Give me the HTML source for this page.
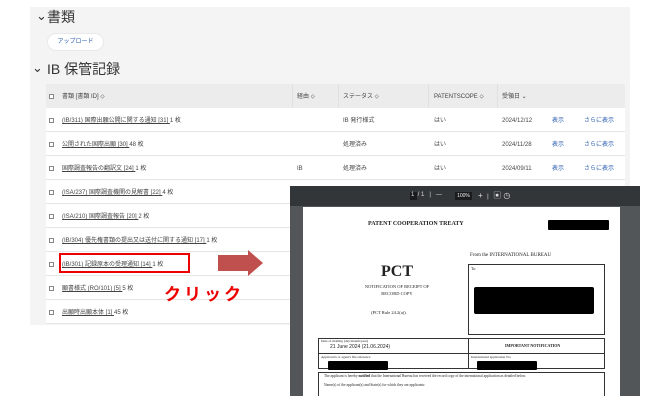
<!DOCTYPE html>
<html><head><meta charset="utf-8"><style>
*{margin:0;padding:0;box-sizing:border-box}
body{width:660px;height:407px;background:#fff;position:relative;overflow:hidden;font-family:"Liberation Sans","Noto Sans CJK JP",sans-serif;color:#333}
.a{position:absolute}
.panel{left:30px;top:7px;width:600px;height:318px;background:#f5f4f5}
.t{font-size:6px;line-height:8px;white-space:nowrap;color:#444}
.lk{text-decoration:underline;color:#444}
.bl{color:#2a5db0}
.cb{width:5px;height:5px;border:0.7px solid #888;background:#fff}
.row{left:46px;width:579px;height:24px;background:#fff;border-bottom:1px solid #e6e6e6}
.serif{font-family:"Liberation Serif",serif;color:#222;white-space:nowrap}
</style></head><body>
<div class="a panel"></div>
<div class="a" style="left:36px;top:8px;font-size:13px;color:#333">⌄</div>
<div class="a" style="left:47px;top:7px;font-size:14px;color:#333">書類</div>
<div class="a" style="left:47px;top:33px;width:57px;height:18px;border-radius:9px;background:#fff;border:1px solid #e8e8e8;font-size:6px;color:#2a5db0;text-align:center;line-height:16px">アップロード</div>
<div class="a" style="left:32px;top:60px;font-size:13px;color:#333">⌄</div>
<div class="a" style="left:47px;top:59px;font-size:14px;color:#333">IB 保管記録</div>
<div class="a" style="left:46px;top:84px;width:579px;height:24px;background:#ececec"></div>
<div class="a" style="left:46px;top:108px;width:579px;height:216px;background:#fff"></div>
<div class="a cb" style="left:49px;top:94px"></div>
<div class="a t" style="left:62px;top:93px">書類 [書類 ID] ⬦</div>
<div class="a t" style="left:297px;top:93px">経由 ⬦</div>
<div class="a t" style="left:343px;top:93px">ステータス ⬦</div>
<div class="a t" style="left:434px;top:93px">PATENTSCOPE ⬦</div>
<div class="a t" style="left:502px;top:93px">受領日 ⌄</div>
<div class="a" style="left:292px;top:84px;width:1px;height:24px;background:#e0e0e0"></div>
<div class="a" style="left:338px;top:84px;width:1px;height:24px;background:#e0e0e0"></div>
<div class="a" style="left:428px;top:84px;width:1px;height:24px;background:#e0e0e0"></div>
<div class="a" style="left:497px;top:84px;width:1px;height:24px;background:#e0e0e0"></div>
<div class="a" style="left:542px;top:84px;width:1px;height:240px;background:#ececec"></div>
<div class="a" style="left:574px;top:84px;width:1px;height:240px;background:#ececec"></div>

<div class="a row" style="top:108px"></div><div class="a cb" style="left:49px;top:118px"></div><div class="a t" style="left:62px;top:117px"><span class="lk">(IB/311) 国際出願公開に関する通知 [31] </span> 1 枚</div>
<div class="a t" style="left:343px;top:117px">IB 発行様式</div><div class="a t" style="left:434px;top:117px">はい</div><div class="a t" style="left:502px;top:117px">2024/12/12</div><div class="a t bl" style="left:552px;top:117px">表示</div><div class="a t bl" style="left:584px;top:117px">さらに表示</div>
<div class="a row" style="top:132px"></div><div class="a cb" style="left:49px;top:142px"></div><div class="a t" style="left:62px;top:141px"><span class="lk">公開された国際出願 [30] </span> 48 枚</div>
<div class="a t" style="left:343px;top:141px">処理済み</div><div class="a t" style="left:434px;top:141px">はい</div><div class="a t" style="left:502px;top:141px">2024/11/28</div><div class="a t bl" style="left:552px;top:141px">表示</div><div class="a t bl" style="left:584px;top:141px">さらに表示</div>
<div class="a row" style="top:156px"></div><div class="a cb" style="left:49px;top:166px"></div><div class="a t" style="left:62px;top:165px"><span class="lk">国際調査報告の翻訳文 [24] </span> 1 枚</div>
<div class="a t" style="left:297px;top:165px">IB</div><div class="a t" style="left:343px;top:165px">処理済み</div><div class="a t" style="left:434px;top:165px">はい</div><div class="a t" style="left:502px;top:165px">2024/09/11</div><div class="a t bl" style="left:552px;top:165px">表示</div><div class="a t bl" style="left:584px;top:165px">さらに表示</div>
<div class="a row" style="top:180px"></div><div class="a cb" style="left:49px;top:190px"></div><div class="a t" style="left:62px;top:189px"><span class="lk">(ISA/237) 国際調査機関の見解書 [22] </span> 4 枚</div>
<div class="a row" style="top:204px"></div><div class="a cb" style="left:49px;top:214px"></div><div class="a t" style="left:62px;top:213px"><span class="lk">(ISA/210) 国際調査報告 [20] </span> 2 枚</div>
<div class="a row" style="top:228px"></div><div class="a cb" style="left:49px;top:238px"></div><div class="a t" style="left:62px;top:237px"><span class="lk">(IB/304) 優先権書類の提出又は送付に関する通知 [17] </span> 1 枚</div>
<div class="a row" style="top:252px"></div><div class="a cb" style="left:49px;top:262px"></div><div class="a t" style="left:62px;top:261px"><span class="lk">(IB/301) 記録原本の受理通知 [14] </span> 1 枚</div>
<div class="a row" style="top:276px"></div><div class="a cb" style="left:49px;top:286px"></div><div class="a t" style="left:62px;top:285px"><span class="lk">願書様式 (RO/101) [5] </span> 5 枚</div>
<div class="a row" style="top:300px"></div><div class="a cb" style="left:49px;top:310px"></div><div class="a t" style="left:62px;top:309px"><span class="lk">出願時出願本体 [1] </span> 45 枚</div>

<div class="a" style="left:59px;top:253px;width:131px;height:20px;border:2.5px solid #e00"></div>
<svg class="a" style="left:218px;top:250px" width="46" height="26"><polygon points="0,5 30,5 30,0 45,13 30,26 30,21 0,21" fill="#c0504d"/></svg>
<div class="a" style="left:164px;top:280px;font-size:17px;font-weight:bold;color:#e00;letter-spacing:3px;white-space:nowrap">クリック</div>

<div class="a" style="left:290px;top:186px;width:350px;height:210px;background:#525659;overflow:hidden">
<div class="a" style="left:0;top:0;width:350px;height:20px;background:#323639"></div>
<div class="a" style="left:120px;top:6px;width:7px;height:8px;background:#191b1c"></div>
<div class="a" style="left:121px;top:6px;font-size:6px;color:#ddd;white-space:nowrap">1 &nbsp;/ 1 &nbsp; | &nbsp;&nbsp;— </div>
<div class="a" style="left:165px;top:6px;width:17px;height:8px;background:#191b1c;font-size:5px;color:#eee;text-align:center;line-height:8px">100%</div>
<div class="a" style="left:188px;top:4px;font-size:8px;color:#ddd;white-space:nowrap">+ &nbsp;<span style="font-size:6px">|</span> &nbsp;▣ ◷</div>
<div class="a" style="left:13px;top:21px;width:317px;height:200px;background:#fff"></div>
<div class="a serif" style="left:78px;top:35px;font-size:6px;font-weight:bold">PATENT COOPERATION TREATY</div>
<div class="a" style="left:258px;top:34px;width:61px;height:10px;background:#000;border-radius:1px"></div>
<div class="a serif" style="left:180px;top:67px;font-size:5px">From the INTERNATIONAL BUREAU</div>
<div class="a" style="left:178px;top:78px;width:137px;height:71px;border:1px solid #333"></div>
<div class="a serif" style="left:181px;top:80px;font-size:4px">To:</div>
<div class="a" style="left:184px;top:101px;width:120px;height:27px;background:#000;border-radius:2px"></div>
<div class="a serif" style="left:91px;top:77px;font-size:16px;font-weight:bold">PCT</div>
<div class="a serif" style="left:57px;top:97px;width:100px;text-align:center;font-size:4.5px;line-height:7px">NOTIFICATION OF RECEIPT OF<br>RECORD COPY</div>
<div class="a serif" style="left:81px;top:124px;font-size:4.5px">(PCT Rule 24.2(a))</div>
<div class="a" style="left:28px;top:152px;width:287px;height:31px;border:1px solid #333"></div>
<div class="a" style="left:178px;top:152px;width:1px;height:31px;background:#333"></div>
<div class="a" style="left:28px;top:167px;width:287px;height:1px;background:#333"></div>
<div class="a serif" style="left:31px;top:153px;font-size:3.5px">Date of mailing (day/month/year)</div>
<div class="a" style="left:40px;top:158px;font-size:5px;color:#222;white-space:nowrap">21 June 2024 (21.06.2024)</div>
<div class="a serif" style="left:215px;top:157px;font-size:4px;font-weight:bold">IMPORTANT NOTIFICATION</div>
<div class="a serif" style="left:31px;top:169px;font-size:3.5px">Applicant's or agent's file reference</div>
<div class="a serif" style="left:181px;top:169px;font-size:3.5px">International application No.</div>
<div class="a" style="left:38px;top:175px;width:60px;height:9px;background:#000;border-radius:1px"></div>
<div class="a" style="left:187px;top:175px;width:60px;height:9px;background:#000;border-radius:1px"></div>
<div class="a" style="left:28px;top:186px;width:287px;height:40px;border:1px solid #333"></div>
<div class="a serif" style="left:34px;top:188px;font-size:3.6px">The applicant is hereby <b>notified</b> that the International Bureau has received the record copy of the international application as detailed below.</div>
<div class="a serif" style="left:34px;top:197px;font-size:3.6px">Name(s) of the applicant(s) and State(s) for which they are applicants:</div>
</div>
</body></html>
